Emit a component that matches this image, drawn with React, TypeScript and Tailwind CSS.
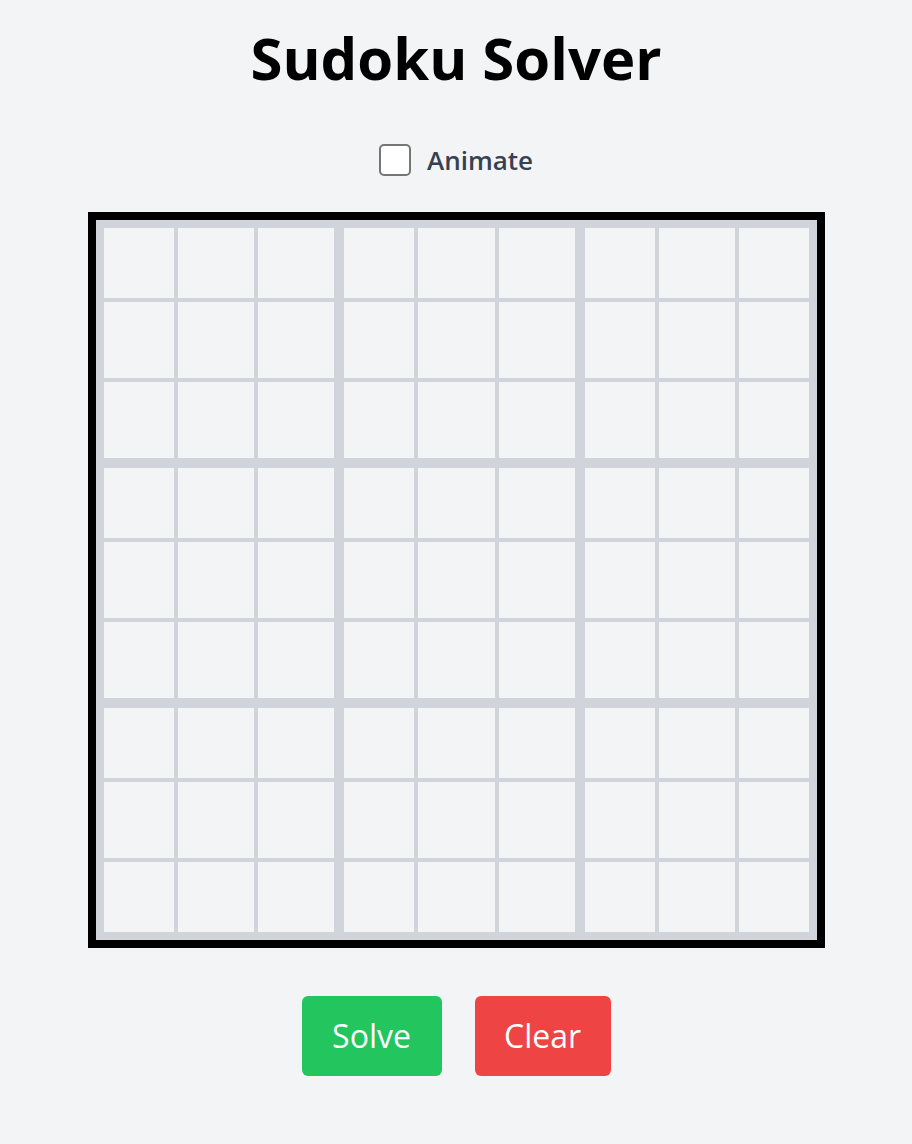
import { useState } from "react";

const colW = ["w-[70px]", "w-[76px]", "w-[76px]", "w-[70px]", "w-[77px]", "w-[76px]", "w-[70px]", "w-[76px]", "w-[70px]"];
const rowH = ["h-[70px]", "h-[76px]", "h-[76px]", "h-[70px]", "h-[76px]", "h-[76px]", "h-[70px]", "h-[76px]", "h-[70px]"];

const gapX = (c: number) => (c === 0 ? "" : c % 3 === 0 ? "ml-[10px]" : "ml-[4px]");
const gapY = (r: number) => (r === 0 ? "" : r % 3 === 0 ? "mt-[10px]" : "mt-[4px]");

const App = () => {
  const [board, setBoard] = useState<string[][]>(
    Array.from({ length: 9 }, () => Array(9).fill(""))
  );
  const [animate, setAnimate] = useState(false);

  const update = (r: number, c: number, v: string) => {
    const val = v.replace(/[^1-9]/g, "").slice(-1);
    setBoard((b) => b.map((row, i) => row.map((x, j) => (i === r && j === c ? val : x))));
  };

  const clear = () => setBoard(Array.from({ length: 9 }, () => Array(9).fill("")));

  return (
    <div className="min-h-screen bg-[#f3f4f6] flex flex-col items-center pt-[29px] font-['Open_Sans',sans-serif]">
      <h1 className="text-[58px] leading-[58px] font-bold text-black">Sudoku Solver</h1>

      {/* Animate toggle */}
      <label className="mt-[57px] flex items-center gap-4 cursor-pointer">
        <input
          type="checkbox"
          checked={animate}
          onChange={(e) => setAnimate(e.target.checked)}
          className="appearance-none w-[32px] h-[32px] rounded-[5px] border-2 border-[#767676] bg-white checked:bg-blue-500"
        />
        <span className="text-[26px] leading-[32px] font-semibold text-[#374151]">Animate</span>
      </label>

      {/* Board */}
      <div className="mt-[36px] border-8 border-black bg-[#d1d5db] p-2">
        {board.map((row, r) => (
          <div key={r} className={`flex ${gapY(r)}`}>
            {row.map((cell, c) => (
              <input
                key={c}
                value={cell}
                onChange={(e) => update(r, c, e.target.value)}
                className={`${colW[c]} ${rowH[r]} ${gapX(c)} bg-[#f3f4f6] text-center text-3xl outline-none`}
              />
            ))}
          </div>
        ))}
      </div>

      {/* Buttons */}
      <div className="mt-[48px] flex gap-[33px]">
        <button className="w-[140px] h-[80px] rounded-md bg-[#22c55e] text-white text-[32px]">Solve</button>
        <button onClick={clear} className="w-[136px] h-[80px] rounded-md bg-[#ef4444] text-white text-[32px]">
          Clear
        </button>
      </div>
    </div>
  );
};

export default App;
